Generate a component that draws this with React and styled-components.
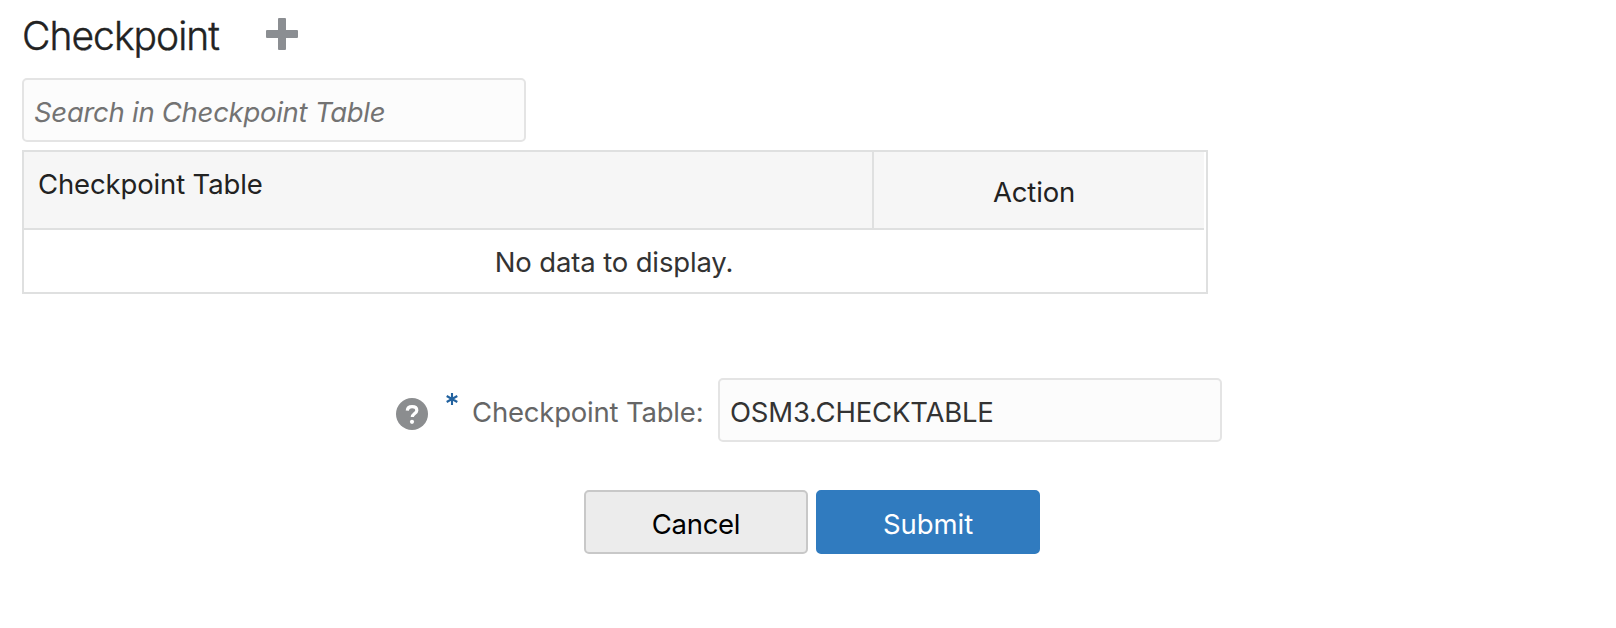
import React, { useState } from "react";
import styled, { createGlobalStyle } from "styled-components";

const GlobalStyle = createGlobalStyle`
  *, *::before, *::after { box-sizing: border-box; }
  body {
    margin: 0;
    background: #fff;
    color: #333;
    font-family: Inter, "Liberation Sans", sans-serif;
    font-size: 27.5px;
    font-weight: 400;
    line-height: 34px;
    letter-spacing: -0.14px;
    -webkit-font-smoothing: antialiased;
  }
`;

const Page = styled.main`
  display: flex;
  flex-direction: column;
  align-items: flex-start;
  min-height: 628px;
  padding: 0 22px;
`;

const Header = styled.header`
  display: flex;
  align-items: flex-start;
  height: 78px;
`;

const Title = styled.h1`
  width: 244px;
  margin: 0;
  padding-top: 12px;
  color: #222;
  font-size: 39px;
  font-weight: 300;
  line-height: 48px;
  letter-spacing: -0.97px;
  -webkit-text-stroke: 0.4px #222;
  white-space: nowrap;
`;

const AddButton = styled.button`
  display: flex;
  margin: 18px 0 0;
  padding: 0;
  border: 0;
  background: none;
`;

const TextField = styled.input`
  width: 504px;
  height: 64px;
  padding: 4px 10px 0;
  border: 2px solid #e4e4e4;
  border-radius: 5px;
  background: #fcfcfc;
  color: #333;
  font: inherit;
  letter-spacing: ${(p) => p.$tracking};
  outline: none;

  &::placeholder {
    color: #737373;
    font-style: italic;
    opacity: 1;
  }
`;

const Table = styled.section`
  width: 1186px;
  height: 144px;
  margin-top: 8px;
  padding-right: 2px;
  border: 2px solid #dfe0e0;
`;

const TableHead = styled.div`
  display: flex;
  height: 78px;
  border-bottom: 2px solid #dfe0e0;
  background: #f6f6f6;
  color: #222;
`;

const NameColumn = styled.div`
  width: 850px;
  padding: 15px 14px 0;
  border-right: 2px solid #dfe0e0;
`;

const ActionColumn = styled.div`
  flex: 1;
  padding-top: 23px;
  padding-right: 10px;
  text-align: center;
`;

const EmptyRow = styled.div`
  padding-top: 15px;
  text-align: center;
`;

const FormRow = styled.div`
  display: flex;
  align-items: flex-start;
  margin: 84px 0 0 374px;
`;

const HelpIcon = styled.svg`
  flex: none;
  margin-top: 20px;
`;

const RequiredMark = styled.svg`
  flex: none;
  margin: 15px 14px 0 18px;
`;

const Label = styled.label`
  width: 246px;
  padding-top: 17px;
  color: #666;
  letter-spacing: -0.2px;
  white-space: nowrap;
`;

const Actions = styled.div`
  display: flex;
  gap: 8px;
  margin: 48px 0 0 562px;
`;

const Button = styled.button`
  width: 224px;
  height: 64px;
  padding: 4px 0 0;
  border: 2px solid ${(p) => (p.$primary ? "#307bbf" : "#c8c8c8")};
  border-radius: 5px;
  background: ${(p) => (p.$primary ? "#307bbf" : "#ececec")};
  color: ${(p) => (p.$primary ? "#fff" : "#000")};
  font: inherit;
  letter-spacing: ${(p) => (p.$primary ? "-0.05px" : "-0.3px")};
`;

export default function App() {
  const [query, setQuery] = useState("");
  const [name, setName] = useState("OSM3.CHECKTABLE");

  return (
    <Page>
      <GlobalStyle />
      <Header>
        <Title>Checkpoint</Title>
        <AddButton aria-label="Add checkpoint">
          <svg width="32" height="32" viewBox="0 0 32 32">
            <path d="M12 1q0-1 1-1h6q1 0 1 1v11h11q1 0 1 1v6q0 1-1 1H20v11q0 1-1 1h-6q-1 0-1-1V20H1q-1 0-1-1v-6q0-1 1-1h11z" fill="#8b8e92" />
          </svg>
        </AddButton>
      </Header>
      <TextField
        $tracking="-0.28px"
        placeholder="Search in Checkpoint Table"
        value={query}
        onChange={(e) => setQuery(e.target.value)}
      />
      <Table>
        <TableHead>
          <NameColumn>Checkpoint Table</NameColumn>
          <ActionColumn>Action</ActionColumn>
        </TableHead>
        <EmptyRow>No data to display.</EmptyRow>
      </Table>
      <FormRow>
        <HelpIcon width="32" height="32" viewBox="0 0 32 32">
          <circle cx="16" cy="16" r="16" fill="#8b8d8f" />
          <path d="M11.3 12.6c.2-2.5 2-4 4.8-4s4.7 1.5 4.7 3.8c0 2.9-4.5 3.3-4.5 6.6" fill="none" stroke="#fff" strokeWidth="3.2" />
          <circle cx="16" cy="23.8" r="2.1" fill="#fff" />
        </HelpIcon>
        <RequiredMark width="12" height="12" viewBox="0 0 12 12">
          <path d="M6 0v12M.7 3l10.6 6M11.3 3L.7 9" stroke="#22629f" strokeWidth="2.1" />
        </RequiredMark>
        <Label htmlFor="checkpoint-table">Checkpoint Table:</Label>
        <TextField
          id="checkpoint-table"
          $tracking="-0.2px"
          value={name}
          onChange={(e) => setName(e.target.value)}
        />
      </FormRow>
      <Actions>
        <Button>Cancel</Button>
        <Button $primary>Submit</Button>
      </Actions>
    </Page>
  );
}
